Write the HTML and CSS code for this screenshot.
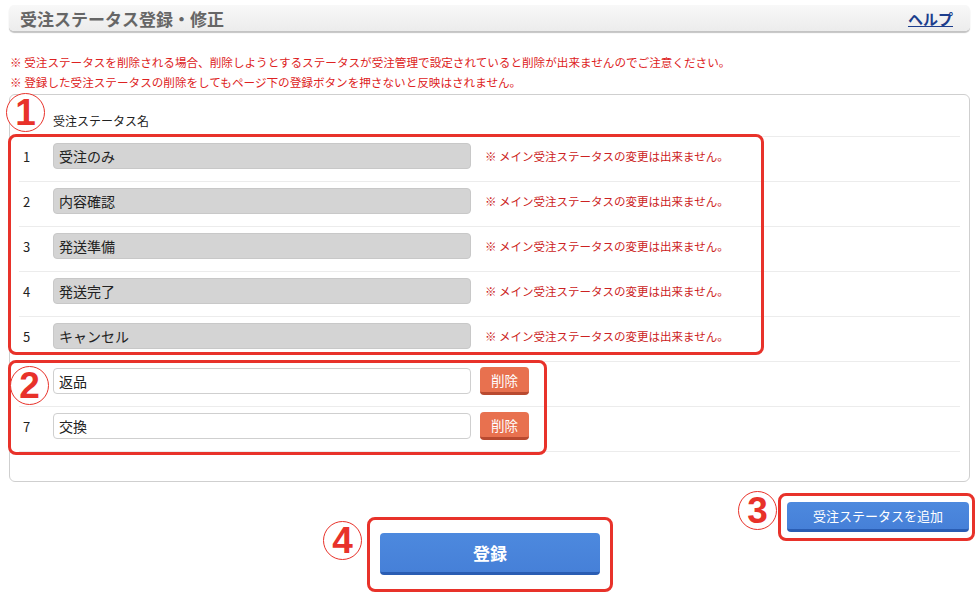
FILE: index.html
```html
<!DOCTYPE html>
<html lang="ja">
<head>
    <meta charset="UTF-8" />
    <meta name="viewport" content="width=device-width, initial-scale=1.0"/>
    <title>受注ステータス登録・修正</title>
    <link rel="stylesheet" href="styles.css">
</head>
<body>

<div class="page">

    <!-- Page header -->
    <div class="page-head">
        <h1>受注ステータス登録・修正</h1>
        <a href="#" class="help">ヘルプ</a>
    </div>

    <!-- Notes -->
    <div class="notes">
        <p>※ 受注ステータスを削除される場合、削除しようとするステータスが受注管理で設定されていると削除が出来ませんのでご注意ください。</p>
        <p>※ 登録した受注ステータスの削除をしてもページ下の登録ボタンを押さないと反映はされません。</p>
    </div>

    <!-- Status list -->
    <div class="panel">
        <div class="row row-head">
            <div class="col-no"></div>
            <div class="col-name">受注ステータス名</div>
        </div>
        <div class="row">
            <div class="col-no">1</div>
            <div class="col-name"><input class="name-input locked" value="受注のみ" readonly></div>
            <div class="col-note">※ メイン受注ステータスの変更は出来ません。</div>
        </div>
        <div class="row">
            <div class="col-no">2</div>
            <div class="col-name"><input class="name-input locked" value="内容確認" readonly></div>
            <div class="col-note">※ メイン受注ステータスの変更は出来ません。</div>
        </div>
        <div class="row">
            <div class="col-no">3</div>
            <div class="col-name"><input class="name-input locked" value="発送準備" readonly></div>
            <div class="col-note">※ メイン受注ステータスの変更は出来ません。</div>
        </div>
        <div class="row">
            <div class="col-no">4</div>
            <div class="col-name"><input class="name-input locked" value="発送完了" readonly></div>
            <div class="col-note">※ メイン受注ステータスの変更は出来ません。</div>
        </div>
        <div class="row">
            <div class="col-no">5</div>
            <div class="col-name"><input class="name-input locked" value="キャンセル" readonly></div>
            <div class="col-note">※ メイン受注ステータスの変更は出来ません。</div>
        </div>
        <div class="row">
            <div class="col-no">6</div>
            <div class="col-name"><input class="name-input" value="返品"></div>
            <div class="col-btn"><button class="btn-delete">削除</button></div>
        </div>
        <div class="row">
            <div class="col-no">7</div>
            <div class="col-name"><input class="name-input" value="交換"></div>
            <div class="col-btn"><button class="btn-delete">削除</button></div>
        </div>
    </div>

    <!-- Actions -->
    <div class="actions">
        <button class="btn-blue btn-add">受注ステータスを追加</button>
        <button class="btn-blue btn-submit">登録</button>
    </div>

    <!-- Annotations -->
    <div class="mark-box box-1"></div>
    <div class="mark-box box-2"></div>
    <div class="mark-box box-3"></div>
    <div class="mark-box box-4"></div>
    <div class="mark-num num-1">1</div>
    <div class="mark-num num-2">2</div>
    <div class="mark-num num-3">3</div>
    <div class="mark-num num-4">4</div>

</div>

</body>
</html>
```

FILE: styles.css
```css
body {
    margin: 0;
    padding: 0;
    background: #fff;
    color: #222;
    font-family: "Noto Sans CJK JP", "Noto Sans", sans-serif;
}

.page {
    position: relative;
    width: 980px;
    height: 600px;
    overflow: hidden;
}

/* header */
.page-head {
    margin: 5px 10px 0 9px;
    height: 26px;
    padding: 0 17px 0 11px;
    background: linear-gradient(to bottom, #f8f8f8, #ececec);
    border-radius: 5px;
    box-shadow: 0 2px 1px #c4c4c4;
    display: flex;
    justify-content: space-between;
    align-items: center;
}

.page-head h1 {
    margin: 0;
    font-size: 17px;
    font-weight: bold;
    color: #666;
}

.help {
    font-size: 15px;
    font-weight: bold;
    color: #1c3d8c;
    text-decoration: underline;
}

/* notes */
.notes {
    margin: 25px 0 0 10px;
}

.notes p {
    margin: 0 0 7px;
    font-size: 11.6px;
    line-height: 13px;
    color: #dd2222;
}

.notes p:last-child {
    margin-bottom: 5px;
}

/* panel */
.panel {
    margin: 0 10px 0 9px;
    padding: 0 9px 29px;
    border: 1px solid #cfcfcf;
    border-radius: 6px;
}

.row {
    display: flex;
    align-items: center;
    box-sizing: border-box;
    height: 45px;
    padding: 6px 0 12px;
    border-bottom: 1px solid #ececec;
}

.row-head {
    height: 42px;
    padding: 10px 0 0;
    font-size: 12px;
}

.col-no {
    width: 34px;
    padding-left: 4px;
    box-sizing: border-box;
    font-size: 13px;
}

.col-name {
    width: 427px;
}

.col-note {
    padding-left: 5px;
    font-size: 11.5px;
    color: #cc2222;
}

.name-input {
    width: 418px;
    height: 26px;
    box-sizing: border-box;
    padding: 0 5px;
    border: 1px solid #cfcfcf;
    border-radius: 4px;
    background: #fff;
    font-family: inherit;
    font-size: 14px;
    color: #222;
}

.name-input.locked {
    background: #d4d4d4;
    border-color: #c8c8c8;
}

.btn-delete {
    width: 49px;
    height: 28px;
    padding: 0;
    border: none;
    border-bottom: 3px solid #b94a30;
    border-radius: 4px;
    background: #e8714f;
    color: #fff;
    font-family: inherit;
    font-size: 13.5px;
    cursor: pointer;
}

/* actions */
.actions {
    display: flex;
    flex-direction: column;
    margin-top: 20px;
}

.btn-blue {
    border: none;
    border-bottom: 3px solid #2a5db3;
    border-radius: 4px;
    background: linear-gradient(to bottom, #4d89de, #4680d8);
    color: #fff;
    font-family: inherit;
    cursor: pointer;
}

.btn-add {
    align-self: flex-end;
    margin-right: 11px;
    width: 182px;
    height: 30px;
    font-size: 13px;
}

.btn-submit {
    align-self: center;
    margin-top: 1px;
    width: 220px;
    height: 42px;
    font-size: 17px;
    font-weight: bold;
}

/* annotations */
.mark-box {
    position: absolute;
    border: 3px solid #e8322a;
    border-radius: 8px;
    box-sizing: border-box;
}

.box-1 { left: 8px; top: 134px; width: 756px; height: 221px; }
.box-2 { left: 8px; top: 360px; width: 539px; height: 95px; }
.box-3 { left: 778px; top: 493px; width: 197px; height: 48px; }
.box-4 { left: 367px; top: 517px; width: 246px; height: 75px; }

.mark-num {
    position: absolute;
    width: 37px;
    height: 37px;
    border: 1.5px solid #e8322a;
    border-radius: 50%;
    background: #fff;
    color: #e8322a;
    font-family: "Liberation Sans", Arial, sans-serif;
    font-size: 37px;
    font-weight: bold;
    line-height: 38px;
    text-align: center;
}

.num-1 { left: 6px; top: 93px; }
.num-2 { left: 10px; top: 366px; }
.num-3 { left: 738px; top: 491px; }
.num-4 { left: 323px; top: 521px; }
```
